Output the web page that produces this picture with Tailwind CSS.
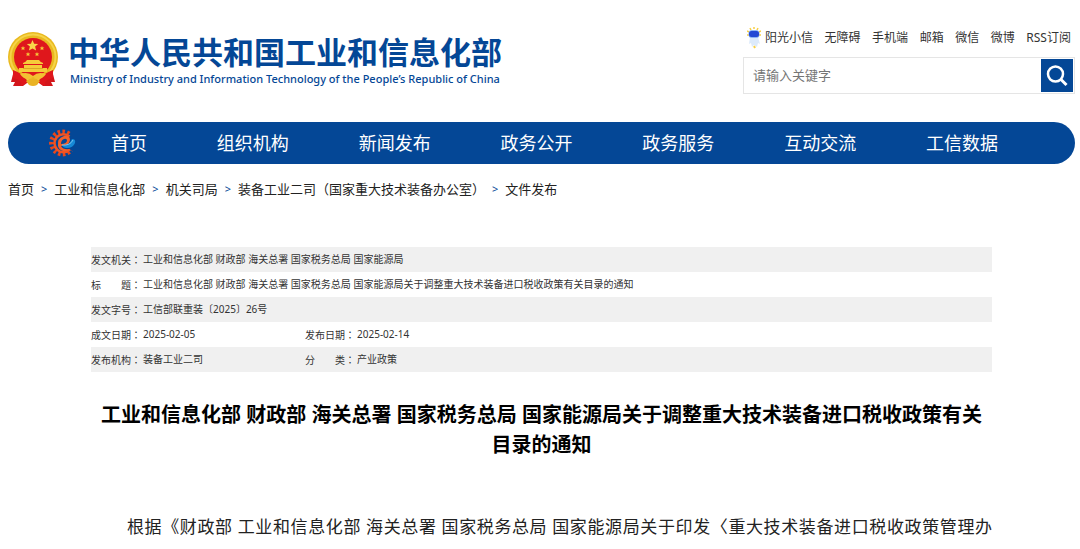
<!DOCTYPE html>
<html lang="zh-CN">
<head>
<meta charset="utf-8">
<meta name="viewport" content="width=device-width, initial-scale=1">
<title>工业和信息化部 文件发布</title>
<script src="https://cdn.jsdelivr.net/npm/@tailwindcss/browser@4"></script>
</head>
<body class="bg-white pl-2 pr-[5px] font-['Noto_Sans','Noto_Sans_CJK_SC',sans-serif] text-[#333]">
<header class="flex justify-between pt-7">
  <a href="#" class="flex gap-[10px] pt-1 text-[#044796]">
    <svg class="h-[58px] w-[50px] shrink-0" viewBox="0 0 50 58" aria-hidden="true">
      <path d="M6 38 3 50l4 0-2 4 10 0 4-3h12l4 3 10 0-2-4 4 0-3-12z" fill="#d3161b"/>
      <circle cx="25" cy="25" r="25" fill="#e9b91f"/>
      <circle cx="25" cy="25" r="22.500" fill="none" stroke="#f6d449" stroke-width="2"/>
      <circle cx="25" cy="25" r="19" fill="#df171c"/>
      <path d="m24.500 8 1.600 3.700 4.100.3-3.100 2.600 1 4-3.600-2.200-3.600 2.200 1-4-3.100-2.600 4.100-.3z" fill="#f9d64a"/>
      <g fill="#f5c839"><path id="s" d="m15 14 .7 1.500 1.600.1-1.200 1 .4 1.600-1.500-.9-1.500.9.4-1.600-1.200-1 1.600-.1z"/><use href="#s" x="19"/><use href="#s" x="5" y="6"/><use href="#s" x="14" y="6"/></g>
      <path d="M15 31q3-1 4-3h12q1 2 4 3v1H15zM16 33h18v3h5v4H11v-4h5z" fill="#f6cb3a"/>
      <path d="M15 36.500h20" stroke="#c98e19" stroke-width=".6"/>
      <path d="M5 38q10 3 15 12l-7 4q2-6-8-8zM45 38q-10 3-15 12l7 4q-2-6 8-8z" fill="#df171c"/>
      <path d="M12 42q8-3 13 2 5-5 13-2-4 6-9 5l-4-2-4 2q-5 1-9-5z" fill="#f3c133"/>
      <path d="M18 49q7-6 14 0l-3 4q-4 2-8 0z" fill="#eab324"/>
    </svg>
    <span class="flex flex-col gap-0.5 pt-px">
      <span class="whitespace-nowrap text-[31px]/[38px] font-bold">中华人民共和国工业和信息化部</span>
      <span class="whitespace-nowrap pl-0.5 font-['Noto_Sans',sans-serif] text-[11px]/[12px] font-medium">Ministry of Industry and Information Technology of the People’s Republic of China</span>
    </span>
  </a>
  <div class="w-[332px] shrink-0">
    <nav class="flex h-5 items-center justify-between pl-1 pr-1 text-[12px]/[20px] whitespace-nowrap" aria-label="快捷链接">
      <a href="#" class="flex items-center gap-1">
        <svg class="h-[22px] w-[14px]" viewBox="0 0 14 22" aria-hidden="true">
          <path d="M7 0v2M3 1l1 2M11 1l-1 2M0 4l2 1M14 4l-2 1M0 8h2M14 8h-2" stroke="#f7cf45" stroke-width="1.500"/>
          <path d="M3 10h8l2 7-2-1-1 4-3-2-2 2-1-4-2 1z" fill="#dceafb"/>
          <rect x="1.500" y="3" width="11" height="8" rx="3.500" fill="#8fb6f2"/>
          <rect x="2" y="4" width="10" height="6" rx="2.500" fill="#2348d4"/>
          <path d="M7 19l1 2" stroke="#f7cf45" stroke-width="2"/>
        </svg>阳光小信</a>
      <a href="#">无障碍</a><a href="#">手机端</a><a href="#">邮箱</a><a href="#">微信</a><a href="#">微博</a><a href="#">RSS订阅</a>
    </nav>
    <form class="mt-[9px] flex h-[37px] border border-[#e5e5e5] p-px">
      <input type="text" aria-label="搜索关键字" placeholder="请输入关键字" class="min-w-0 flex-1 px-2 pt-px text-[13px] outline-none placeholder:text-[#757575]">
      <button type="button" aria-label="搜索" class="flex w-8 items-center justify-center bg-[#044796]">
        <svg class="h-6 w-6" viewBox="0 0 24 24" fill="none" stroke="white" stroke-width="2.500" aria-hidden="true"><circle cx="10.500" cy="10" r="7.500"/><path d="m16 15.500 5.500 5.500" stroke-width="3"/></svg>
      </button>
    </form>
  </div>
</header>
<nav class="mt-7 flex h-[42px] items-center rounded-full bg-[#044796] pl-[41px] pr-[77px] text-[18px] whitespace-nowrap text-white" aria-label="主导航">
  <svg class="mr-[34px] h-7 w-7 shrink-0" viewBox="0 0 28 28" fill="none" aria-hidden="true">
    <path d="M20 5A11 11 0 1 0 22 21" stroke="#e8481c" stroke-width="5" stroke-dasharray="2.400 2.200"/>
    <path d="M20.500 7.500A9 9 0 1 0 21 20.500" stroke="#f15322" stroke-width="2.500"/>
    <path d="M9 17Q8 9 15 7q6-1 6 4-1 6-9 6 2 4 9 3-3 3-7 2-4-1-5-5zm3-2q6 0 6-4-1-2-3-1-3 1-3 5z" fill="#f4602a"/>
    <path d="M13 16q7 1 10-6 4 0 3 4-2 5-8 5-4 0-5-3z" fill="#1689d6"/>
    <path d="M13 16q8 1 11-5" stroke="#78c5f2"/>
  </svg>
  <div class="flex flex-1 items-center justify-between">
    <a href="#">首页</a><a href="#">组织机构</a><a href="#">新闻发布</a><a href="#">政务公开</a><a href="#">政务服务</a><a href="#">互动交流</a><a href="#">工信数据</a>
  </div>
</nav>
<nav class="mt-[15px] flex items-center gap-[7px] text-[13px]/[20px] whitespace-nowrap text-[#222]" aria-label="面包屑">
  <a href="#">首页</a><span class="text-[11px] text-[#044796]">&gt;</span>
  <a href="#">工业和信息化部</a><span class="text-[11px] text-[#044796]">&gt;</span>
  <a href="#">机关司局</a><span class="text-[11px] text-[#044796]">&gt;</span>
  <a href="#">装备工业二司（国家重大技术装备办公室）</a><span class="text-[11px] text-[#044796]">&gt;</span>
  <span>文件发布</span>
</nav>
<main class="mx-[83px] mt-12">
  <table class="w-full table-fixed text-left text-[10px]/[15px] text-[#333] [&_td]:p-0 [&_th]:p-0 [&_th]:font-normal [&_tr]:h-[25px] [&_tr:nth-child(odd)]:bg-[#f0f0f0]">
    <colgroup><col class="w-[52px]"><col class="w-[162px]"><col class="w-[52px]"><col></colgroup>
    <tbody>
      <tr><th scope="row">发文机关<span class="font-['Noto_Sans_CJK_TC',sans-serif]" lang="zh-TW">：</span></th><td colspan="3">工业和信息化部 财政部 海关总署 国家税务总局 国家能源局</td></tr>
      <tr><th scope="row">标　　题<span class="font-['Noto_Sans_CJK_TC',sans-serif]" lang="zh-TW">：</span></th><td colspan="3">工业和信息化部 财政部 海关总署 国家税务总局 国家能源局关于调整重大技术装备进口税收政策有关目录的通知</td></tr>
      <tr><th scope="row">发文字号<span class="font-['Noto_Sans_CJK_TC',sans-serif]" lang="zh-TW">：</span></th><td colspan="3">工信部联重装〔2025〕26号</td></tr>
      <tr><th scope="row">成文日期<span class="font-['Noto_Sans_CJK_TC',sans-serif]" lang="zh-TW">：</span></th><td>2025-02-05</td><th scope="row">发布日期<span class="font-['Noto_Sans_CJK_TC',sans-serif]" lang="zh-TW">：</span></th><td>2025-02-14</td></tr>
      <tr><th scope="row">发布机构<span class="font-['Noto_Sans_CJK_TC',sans-serif]" lang="zh-TW">：</span></th><td>装备工业二司</td><th scope="row">分　　类<span class="font-['Noto_Sans_CJK_TC',sans-serif]" lang="zh-TW">：</span></th><td>产业政策</td></tr>
    </tbody>
  </table>
  <h1 class="mt-7 px-2 text-center text-[20px]/[30px] font-bold text-black">工业和信息化部 财政部 海关总署 国家税务总局 国家能源局关于调整重大技术装备进口税收政策有关目录的通知</h1>
  <p class="mt-[51px] indent-9 text-[17px]/[32px] text-[#222] [text-align-last:justify]">根据《财政部 工业和信息化部 海关总署 国家税务总局 国家能源局关于印发〈重大技术装备进口税收政策管理办</p>
</main>
</body>
</html>
